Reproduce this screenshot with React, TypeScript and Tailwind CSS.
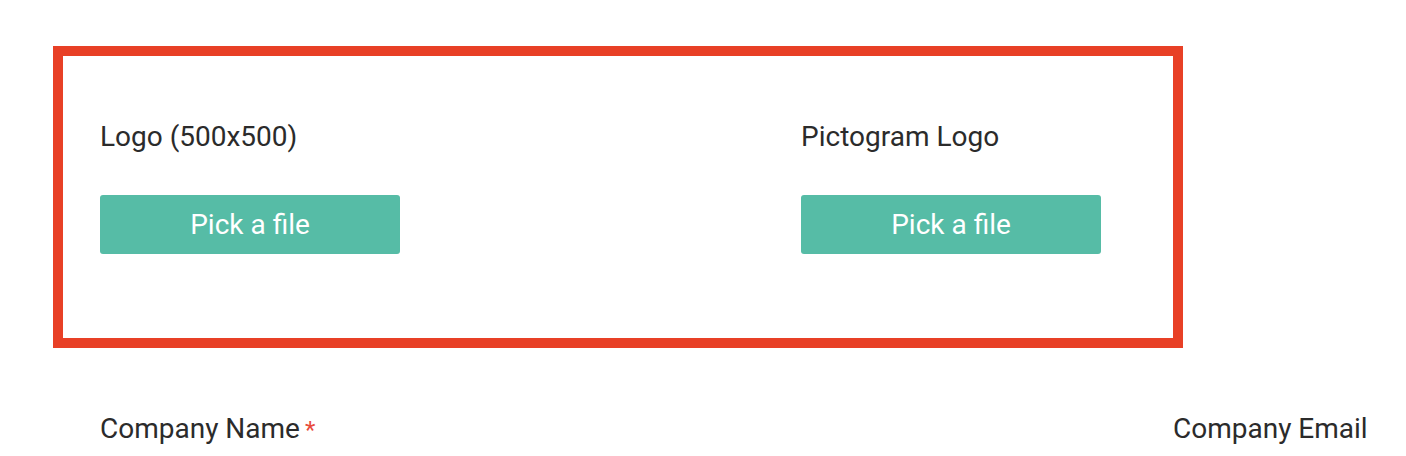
export default function App() {
  return (
    <div className="min-h-[456px] w-[1406px] overflow-hidden bg-white font-['Roboto',sans-serif] text-[#2b2b2b]">
      <div className="ml-[53px] mt-[46px] h-[302px] w-[1130px] border-[10px] border-[#e84026] pl-[37px] pt-[66px]">
        <div className="grid grid-cols-[701px_300px]">
          <UploadField label="Logo (500x500)" />
          <UploadField label="Pictogram Logo" />
        </div>
      </div>
      <div className="mt-[66px] flex pl-[100px]">
        <div className="w-[1073px] text-[28px] leading-[30px]">
          Company Name<span className="ml-[5px] text-[24px] text-[#e84b3c]">*</span>
        </div>
        <div className="whitespace-nowrap text-[28px] leading-[30px]">Company Email</div>
      </div>
    </div>
  );
}

function UploadField({ label }: { label: string }) {
  return (
    <div className="flex flex-col">
      <label className="text-[28px] leading-[30px]">{label}</label>
      <button
        type="button"
        className="mt-[43px] h-[59px] w-[300px] rounded-[3px] bg-[#56bca6] text-[28px] text-white"
      >
        Pick a file
      </button>
    </div>
  );
}
